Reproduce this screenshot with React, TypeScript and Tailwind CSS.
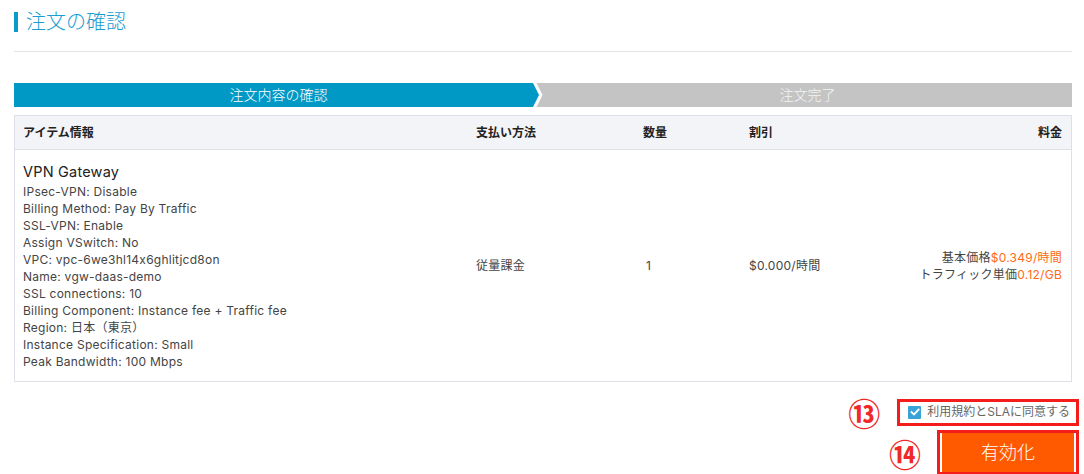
import React from "react";

const details = [
  "IPsec-VPN: Disable",
  "Billing Method: Pay By Traffic",
  "SSL-VPN: Enable",
  "Assign VSwitch: No",
  "VPC: vpc-6we3hl14x6ghlitjcd8on",
  "Name: vgw-daas-demo",
  "SSL connections: 10",
  "Billing Component: Instance fee + Traffic fee",
  "Region: 日本（東京）",
  "Instance Specification: Small",
  "Peak Bandwidth: 100 Mbps",
];

export default function App() {
  return (
    <div className="w-[1084px] h-[474px] bg-white overflow-hidden text-[#333] font-['Inter','Noto_Sans_CJK_JP',sans-serif] [font-feature-settings:'calt'_0]">
      <div className="pl-[14px] pr-[12px] pt-[12px]">
        <div className="flex items-center h-[20px]">
          <div className="w-[4px] h-[20px] bg-[#0a9acb]" />
          <div className="ml-[8px] text-[20px] leading-[20px] text-[#1b9dd0] font-light">注文の確認</div>
        </div>
        <div className="mt-[19px] h-px bg-[#e3e3e3]" />

        <div className="mt-[31px] h-[24px] flex">
          <div className="w-[519px] bg-[#0099c6] flex items-center justify-center pl-[10px] text-white text-[14px] leading-none font-light">
            注文内容の確認
          </div>
          <svg width="10" height="24" viewBox="0 0 10 24" className="shrink-0 block">
            <rect x="0" y="0" width="10" height="24" fill="#c4c4c4" />
            <polygon points="0,0 3.5,0 9.5,12 3.5,24 0,24" fill="#ffffff" />
            <polygon points="0,0 6,12 0,24" fill="#0099c6" />
          </svg>
          <div className="flex-1 bg-[#c4c4c4] flex items-center justify-center text-[#f4f4f4] text-[14px] leading-none font-light">
            注文完了
          </div>
        </div>

        <div className="mt-[8px] border border-[#dde1e7]">
          <div className="grid grid-cols-[453px_167px_106px_150px_1fr] h-[34px] bg-[#f3f4f8] border-b border-[#dde1e7] items-center text-[12px] font-bold text-[#222]">
            <div className="pl-[8px]">アイテム情報</div>
            <div className="pl-[8px]">支払い方法</div>
            <div className="pl-[8px]">数量</div>
            <div className="pl-[8px]">割引</div>
            <div className="pr-[9px] text-right">料金</div>
          </div>
          <div className="grid grid-cols-[453px_167px_106px_150px_1fr] items-center text-[12px] text-[#444] tracking-[0.25px]">
            <div className="pl-[8px] pt-[12px] pb-[11px]">
              <div className="text-[14.5px] leading-[20px] text-[#222] tracking-[0.2px]">VPN Gateway</div>
              <div className="mt-[1px]">
                {details.map((d) => (
                  <div key={d} className="leading-[17px]">{d}</div>
                ))}
              </div>
            </div>
            <div className="pl-[8px]">従量課金</div>
            <div className="pl-[11px]">1</div>
            <div className="pl-[8px]">$0.000/時間</div>
            <div className="pr-[9px] text-right leading-[17px]">
              <div>
                基本価格<span className="text-[#ff6a13]">$0.349/時間</span>
              </div>
              <div>
                トラフィック単価<span className="text-[#ff6a13]">0.12/GB</span>
              </div>
            </div>
          </div>
        </div>
      </div>

      <div className="flex flex-col items-end pr-[5px] mt-[14px]">
        <div className="flex items-center">
          <span className="text-[32px] leading-none text-[#f02828] font-bold font-['Noto_Sans_CJK_JP',sans-serif]">⑬</span>
          <div className="ml-[17px] h-[27px] border-[3px] border-[#f51c1c] flex items-center pl-[8px] pr-[6px]">
            <div className="w-[13px] h-[13px] bg-[#3aa3d6] flex items-center justify-center rounded-[1px]">
              <svg width="10" height="10" viewBox="0 0 10 10">
                <path d="M1.6 5.2 L4 7.4 L8.6 2.6" stroke="#fff" strokeWidth="1.9" fill="none" strokeLinecap="square" />
              </svg>
            </div>
            <span className="ml-[6px] text-[12px] leading-none text-[#666]">利用規約とSLAに同意する</span>
          </div>
        </div>
        <div className="mt-[2px] flex items-center">
          <span className="text-[32px] leading-none text-[#f02828] font-bold font-['Noto_Sans_CJK_JP',sans-serif]">⑭</span>
          <div className="ml-[16px] w-[142px] h-[45px] border-[3px] border-[#f51c1c] bg-white px-[2px]">
            <div className="h-full bg-[#ff5a00] flex items-center justify-center text-white text-[18px] leading-none font-light">
              有効化
            </div>
          </div>
        </div>
      </div>
    </div>
  );
}
